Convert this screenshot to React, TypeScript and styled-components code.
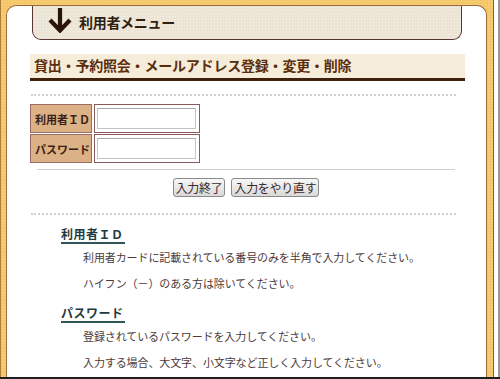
import React from "react";
import styled, { createGlobalStyle } from "styled-components";

const GlobalStyle = createGlobalStyle`
  html, body {
    margin: 0;
    padding: 0;
    background: #ffffff;
    font-family: "Noto Sans CJK JP", "Noto Sans", sans-serif;
  }
`;

const Shell = styled.div`
  width: 500px;
  height: 379px;
  overflow: hidden;
  display: flex;
  box-sizing: border-box;
  border-bottom: 2px solid #1e1e1e;
`;

const Frame = styled.div`
  width: 494px;
  height: 100%;
  box-sizing: border-box;
  padding: 5px 6px 0 5px;
  background: #f4c868;
  background-image: radial-gradient(rgba(255, 240, 200, 0.35) 1px, transparent 1px);
  background-size: 3px 3px;
  border-left: 1px solid #b07c3c;
  border-right: 1px solid #8a5c3a;
`;

const Edge = styled.div`
  flex: 1;
  border-right: 2px solid #9a9a9a;
`;

const Inner = styled.div`
  height: 100%;
  background: #ffffff;
  border: 1px solid #9a6a3a;
  border-bottom: none;
  border-radius: 10px 10px 0 0;
  box-sizing: border-box;
  padding: 0 0 0 23px;
  overflow: hidden;
`;

const MenuBox = styled.div`
  width: 430px;
  height: 34px;
  margin-left: 2px;
  box-sizing: border-box;
  border: 1px solid #5a3434;
  border-top: none;
  border-radius: 0 0 9px 9px;
  background: #ece5d5;
  background-image: radial-gradient(rgba(255, 255, 255, 0.45) 1px, transparent 1px);
  background-size: 3px 3px;
  display: flex;
  align-items: center;
  padding: 0 0 4px 15px;
  gap: 7px;
`;

const MenuTitle = styled.span`
  font-size: 14px;
  font-weight: bold;
  color: #2e1e14;
  letter-spacing: -0.3px;
  margin-top: 2px;
`;

const TitleBand = styled.h2`
  margin: 14px 0 0 0;
  width: 435px;
  box-sizing: border-box;
  height: 27px;
  padding: 1px 0 0 4px;
  background: #f6ecda;
  border-bottom: 3px solid #3e200c;
  font-size: 14px;
  font-weight: bold;
  color: #5a2e0c;
  line-height: 20px;
  letter-spacing: -0.2px;
`;

const Dotted = styled.div<{ $top: number }>`
  width: 425px;
  margin: ${(p) => p.$top}px 0 0 1px;
  border-top: 2px dotted #d0d0d0;
  height: 0;
`;

const FormTable = styled.table`
  margin: 7px 0 0 0;
  border-collapse: separate;
  border-spacing: 2px 1px;
  position: relative;
  left: -2px;
`;

const LabelCell = styled.th`
  width: 62px;
  height: 29px;
  padding: 0 0 0 4px;
  box-sizing: border-box;
  background: #dcb185;
  border: 1px solid #9a6a64;
  font-size: 11px;
  font-weight: bold;
  color: #3a2014;
  text-align: left;
  white-space: nowrap;
`;

const InputCell = styled.td`
  width: 106px;
  height: 29px;
  padding: 0 0 0 2px;
  box-sizing: border-box;
  border: 1px solid #8a5a5a;
  background: #ffffff;
`;

const TextInput = styled.input`
  display: block;
  width: 99px;
  height: 21px;
  box-sizing: border-box;
  border: 1px solid #c4c4c4;
  border-top-color: #a8a8a8;
  outline: none;
`;

const Rule = styled.div`
  width: 418px;
  margin: 5px 0 0 7px;
  border-top: 1px solid #cfcfcf;
`;

const ButtonRow = styled.div`
  display: flex;
  justify-content: center;
  gap: 6px;
  margin: 8px 0 0 0;
  width: 434px;
  position: relative;
  left: -1px;
`;

const Button = styled.button`
  height: 19px;
  padding: 0 2px;
  box-sizing: border-box;
  border: 1px solid #8a8a8a;
  border-radius: 3px;
  background: linear-gradient(#f7f7f7, #d9d9d9);
  font-family: "Noto Sans CJK JP", sans-serif;
  font-size: 12px;
  line-height: 16px;
  color: #3a2a2a;
  letter-spacing: -0.3px;
`;

const Heading = styled.h3`
  display: inline-block;
  margin: 0;
  padding: 0 1px 0 0;
  font-size: 12px;
  font-weight: bold;
  color: #1f3a3e;
  border-bottom: 2px solid #2f5558;
  line-height: 16px;
  letter-spacing: 0.5px;
`;

const HelpBlock = styled.div<{ $top: number }>`
  margin: ${(p) => p.$top}px 0 0 31px;
`;

const HelpText = styled.p`
  margin: 0 0 0 53px;
  font-size: 11px;
  color: #4d3a3a;
  line-height: 26px;
  letter-spacing: -0.1px;
`;

const ArrowIcon = () => (
  <svg width="24" height="25" viewBox="0 0 24 25">
    <path d="M12 0 V21" stroke="#2a140a" strokeWidth="4.2" fill="none" />
    <path d="M2 12 L12 22.5 L22 12" stroke="#2a140a" strokeWidth="4.2" fill="none" strokeLinejoin="miter" />
  </svg>
);

export default function App() {
  return (
    <>
      <GlobalStyle />
      <Shell>
        <Frame>
          <Inner>
            <MenuBox>
              <ArrowIcon />
              <MenuTitle>利用者メニュー</MenuTitle>
            </MenuBox>
            <TitleBand>貸出・予約照会・メールアドレス登録・変更・削除</TitleBand>
            <Dotted $top={13} />
            <FormTable>
              <tbody>
                <tr>
                  <LabelCell>利用者ＩＤ</LabelCell>
                  <InputCell>
                    <TextInput type="text" />
                  </InputCell>
                </tr>
                <tr>
                  <LabelCell>パスワード</LabelCell>
                  <InputCell>
                    <TextInput type="password" />
                  </InputCell>
                </tr>
              </tbody>
            </FormTable>
            <Rule />
            <ButtonRow>
              <Button>入力終了</Button>
              <Button>入力をやり直す</Button>
            </ButtonRow>
            <Dotted $top={16} />
            <HelpBlock $top={5}>
              <Heading>利用者ＩＤ</Heading>
            </HelpBlock>
            <HelpText>利用者カードに記載されている番号のみを半角で入力してください。</HelpText>
            <HelpText>ハイフン（－）のある方は除いてください。</HelpText>
            <HelpBlock $top={3}>
              <Heading>パスワード</Heading>
            </HelpBlock>
            <HelpText>登録されているパスワードを入力してください。</HelpText>
            <HelpText>入力する場合、大文字、小文字など正しく入力してください。</HelpText>
          </Inner>
        </Frame>
        <Edge />
      </Shell>
    </>
  );
}
